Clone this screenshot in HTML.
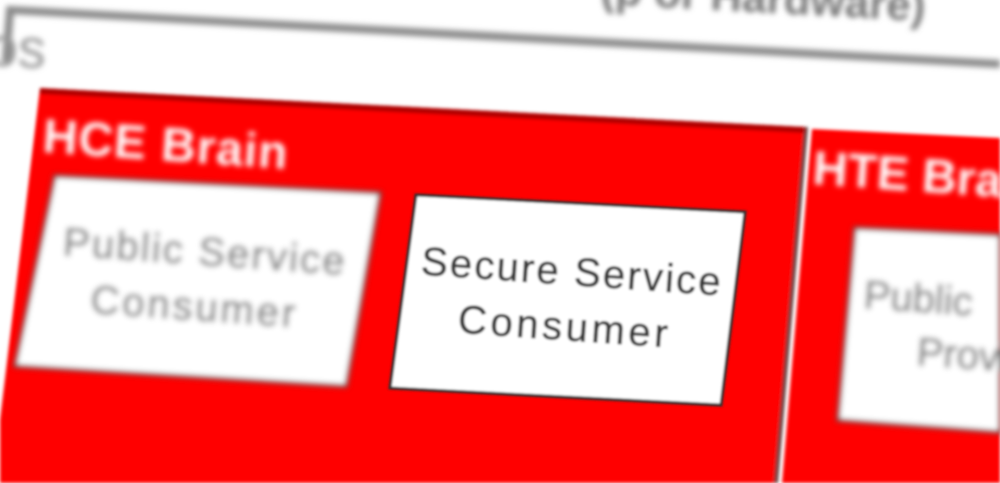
<!DOCTYPE html>
<html><head><style>html,body{margin:0;padding:0;background:#fff;overflow:hidden}</style></head>
<body>
<svg width="1000" height="483" viewBox="0 0 1000 483" xmlns="http://www.w3.org/2000/svg" style="display:block">
<defs>
<filter id="b3"><feGaussianBlur stdDeviation="2.8"/></filter>
<filter id="b2"><feGaussianBlur stdDeviation="1.6"/></filter>
<filter id="b1"><feGaussianBlur stdDeviation="1.1"/></filter>
</defs>
<rect width="1000" height="483" fill="#fff"/>
<g filter="url(#b3)">
<polyline points="6,62 10,10 1000,64" fill="none" stroke="#8a8a8a" stroke-width="8"/>
<text x="600" y="4" font-family="Liberation Sans, sans-serif" font-weight="bold" font-size="44" fill="#777" transform="rotate(3 600 4)">(p or Hardware)</text>
<text x="-14" y="66" font-family="Liberation Sans, sans-serif" font-size="56" fill="#999" transform="rotate(3 0 66)">os</text>
</g>
<g filter="url(#b2)">
<polygon points="40,88 805,127 775,483 0,483 0,420" fill="#ff0000"/>
<polygon points="812,129 1000,138 1000,483 782,483" fill="#ff0000"/>
<line x1="806" y1="127" x2="776" y2="483" stroke="#6a4040" stroke-width="4"/>
<polygon points="40,88 805,127 805,133 40,94" fill="#b00000"/>
</g>
<g filter="url(#b3)">
<polygon points="55,176 380,193 346,386 15,366" fill="#fff" stroke="#555" stroke-width="3"/>
<text x="42" y="152" font-family="Liberation Sans, sans-serif" font-weight="bold" font-size="48" fill="#fff" textLength="245" transform="rotate(4 42 152)">HCE Brain</text>
<text x="203" y="265" text-anchor="middle" font-family="Liberation Sans, sans-serif" font-size="40" fill="#808080" stroke="#808080" stroke-width="0.8" textLength="282" transform="rotate(4 203 265)">Public Service</text>
<text x="192" y="320" text-anchor="middle" font-family="Liberation Sans, sans-serif" font-size="40" fill="#808080" stroke="#808080" stroke-width="0.8" textLength="205" transform="rotate(4 192 320)">Consumer</text>
<polygon points="855,228 1000,235 1000,432 838,420" fill="#fff" stroke="#555" stroke-width="3"/>
<text x="812" y="184" font-family="Liberation Sans, sans-serif" font-weight="bold" font-size="48" fill="#fff" transform="rotate(4 812 184)">HTE Brain</text>
<text x="863" y="308" font-family="Liberation Sans, sans-serif" font-size="40" fill="#808080" stroke="#808080" stroke-width="0.8" transform="rotate(4 863 308)">Public</text>
<text x="916" y="365" font-family="Liberation Sans, sans-serif" font-size="40" fill="#808080" stroke="#808080" stroke-width="0.8" transform="rotate(4 916 365)">Provider</text>
</g>
<g filter="url(#b1)">
<polygon points="416,195 745,212 721,405 390,388" fill="#fff" stroke="#333" stroke-width="3"/>
<text x="570" y="285" text-anchor="middle" font-family="Liberation Sans, sans-serif" font-size="40" fill="#383838" stroke="#383838" stroke-width="0.6" textLength="300" transform="rotate(4 570 285)">Secure Service</text>
<text x="562" y="340" text-anchor="middle" font-family="Liberation Sans, sans-serif" font-size="40" fill="#383838" stroke="#383838" stroke-width="0.6" textLength="210" transform="rotate(4 562 340)">Consumer</text>
</g>
</svg>
</body></html>
